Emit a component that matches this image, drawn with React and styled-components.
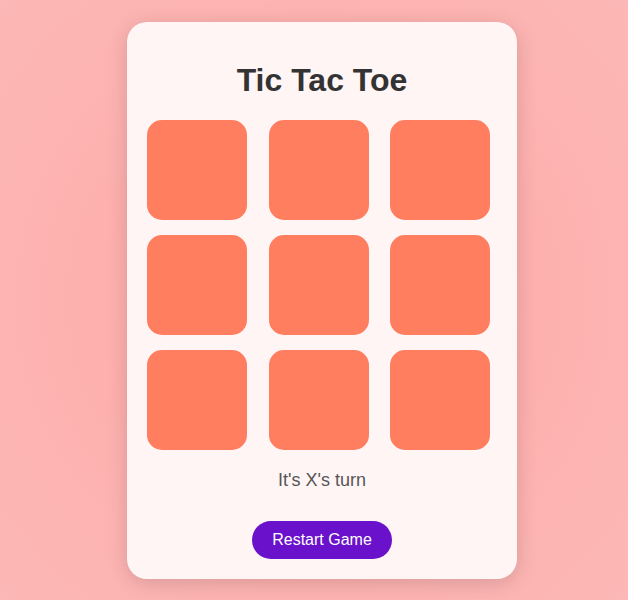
import React, { useState } from "react"
import styled, { createGlobalStyle } from "styled-components"

const GlobalStyle = createGlobalStyle`
    html, body {
        margin:0;
        padding:0;
    }
    body {
        font-family:"Liberation Sans", Arial, sans-serif;
        overflow:hidden;
    }
`

const Page = styled.div`
    box-sizing:border-box;
    width:100%;
    height:100vh;
    padding-left:16px;
    display:flex;
    align-items:center;
    justify-content:center;
    background:radial-gradient(circle at 50% 50%, #ffa8a8 0%, #fdb1af 55%, #fcb8b6 100%);
`

const Card = styled.main`
    box-sizing:border-box;
    width:390px;
    padding:20px;
    background-color:#fff5f5;
    border-radius:20px;
    box-shadow:0 4px 20px rgba(0, 0, 0, 0.15);
    display:flex;
    flex-direction:column;
    align-items:center;
`

const Title = styled.h1`
    margin:20px 0 21px;
    font-size:32px;
    font-weight:bold;
    color:#333;
`

const Board = styled.div`
    width:100%;
    display:grid;
    grid-template-columns:repeat(3, 1fr);
    gap:15px;
`

const Cell = styled.button`
    width:100px;
    height:100px;
    border:none;
    border-radius:15px;
    background-color:#ff7e5f;
    color:#fff;
    font-family:inherit;
    font-size:48px;
    font-weight:bold;
    cursor:pointer;
    padding:0;
`

const Status = styled.p`
    margin:20px 0;
    font-size:18px;
    color:#555;
`

const RestartButton = styled.button`
    margin-top:10px;
    padding:10px 20px;
    border:none;
    border-radius:20px;
    background-color:#6a11cb;
    color:#fff;
    font-family:inherit;
    font-size:16px;
    cursor:pointer;
`

function App(){
    const [cells, setCells] = useState(Array(9).fill(null))
    const [turn, setTurn] = useState('X')

    const play = (i) => {
        if (cells[i]) return
        const next = cells.slice()
        next[i] = turn
        setCells(next)
        setTurn(turn === 'X' ? 'O' : 'X')
    }

    const restart = () => {
        setCells(Array(9).fill(null))
        setTurn('X')
    }

    return(
        <Page>
            <GlobalStyle/>
            <Card>
                <Title>Tic Tac Toe</Title>
                <Board>
                    {cells.map((value, i) => (
                        <Cell key={i} onClick={() => play(i)}>{value}</Cell>
                    ))}
                </Board>
                <Status>It's {turn}'s turn</Status>
                <RestartButton onClick={restart}>Restart Game</RestartButton>
            </Card>
        </Page>
    )
}

export default App
